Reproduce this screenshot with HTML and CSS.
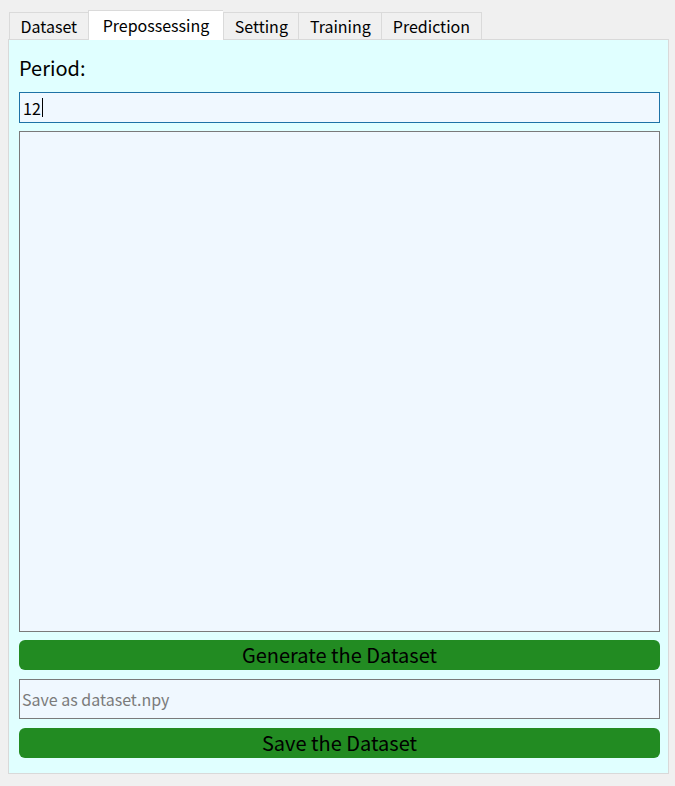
FILE: index.html
```html
<!DOCTYPE html>
<html>
<head>
<meta charset="utf-8">
<link rel="stylesheet" href="styles.css">
</head>
<body>
<div class="tabs">
  <div class="tab">Dataset</div>
  <div class="tab active">Prepossessing</div>
  <div class="tab">Setting</div>
  <div class="tab">Training</div>
  <div class="tab">Prediction</div>
</div>
<div class="panel">
  <div class="label">Period:</div>
  <div class="field focused"><span>12</span><span class="caret"></span></div>
  <div class="output"></div>
  <div class="button">Generate the Dataset</div>
  <div class="field save"><span class="placeholder">Save as dataset.npy</span></div>
  <div class="button second">Save the Dataset</div>
</div>
</body>
</html>
```
FILE: styles.css
```css
html, body {
  margin: 0;
  padding: 0;
}
body {
  background: #f0f0f0;
  width: 675px;
  height: 786px;
  font-family: "Noto Sans CJK SC", "Noto Sans", sans-serif;
  color: #000;
}
.tabs {
  display: flex;
  align-items: flex-end;
  padding-left: 9px;
  padding-top: 11px;
  height: 28px;
}
.tab {
  box-sizing: border-box;
  height: 27px;
  padding: 0 10.5px;
  font-size: 16px;
  line-height: 27px;
  background: #f0f0f0;
  border: 1px solid #dadada;
  border-bottom: none;
  border-right: none;
  color: #000;
}
.tab:last-child {
  border-right: 1px solid #dadada;
}
.tab.active {
  background: #ffffff;
  padding: 0 14px;
  line-height: 28px;
  position: relative;
  z-index: 1;
  margin-bottom: -1px;
  height: 30px;
}
.panel {
  box-sizing: border-box;
  margin-left: 8px;
  width: 661px;
  height: 735px;
  background: #e0ffff;
  border: 1px solid #d9d9d9;
  padding: 13px 8px 0 10px;
  display: flex;
  flex-direction: column;
}
.label {
  font-size: 20px;
  line-height: 30px;
  height: 30px;
}
.field {
  box-sizing: border-box;
  height: 31px;
  margin-top: 9px;
  background: #f0f8ff;
  border: 1px solid #7a7a7a;
  display: flex;
  align-items: center;
  padding-left: 3px;
  font-size: 16px;
}
.field.focused {
  border-color: #1e72a6;
}
.caret {
  display: inline-block;
  width: 1px;
  height: 19px;
  background: #000;
  margin-left: 1px;
}
.output {
  box-sizing: border-box;
  height: 501px;
  margin-top: 8px;
  background: #f0f8ff;
  border: 1px solid #7a7a7a;
}
.button {
  box-sizing: border-box;
  height: 30px;
  margin-top: 8px;
  background: #228b22;
  border-radius: 6px;
  text-align: center;
  font-size: 20px;
  line-height: 30px;
  color: #000;
}
.button.second {
  margin-top: 9px;
}
.field.save {
  height: 40px;
  margin-top: 9px;
  padding-left: 2px;
  font-size: 16px;
}
.placeholder {
  color: #7b7b7b;
}
```
